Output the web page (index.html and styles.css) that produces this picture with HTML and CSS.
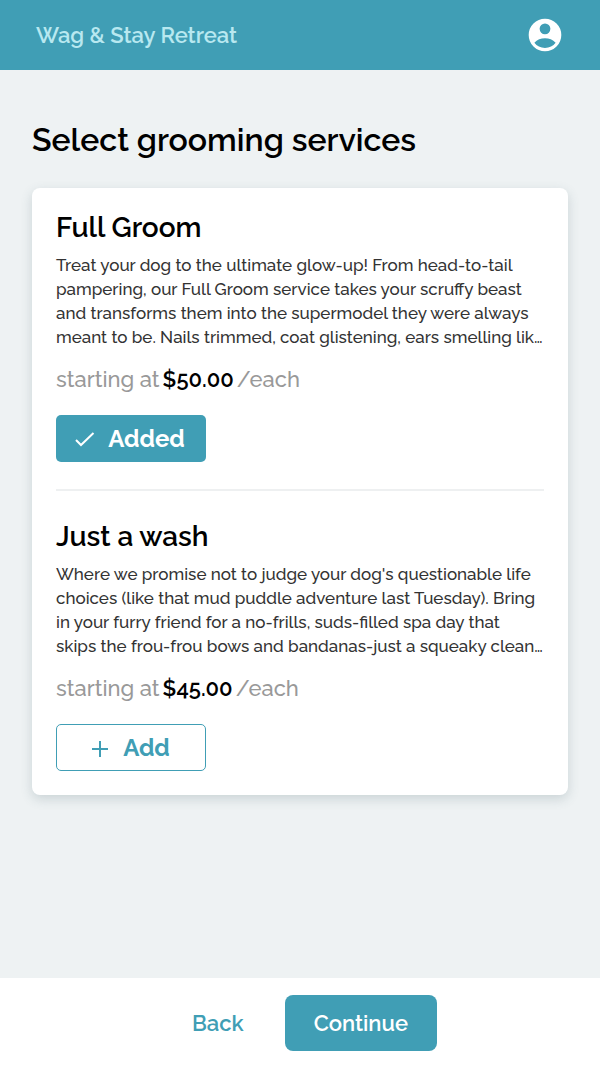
FILE: index.html
```html
<!DOCTYPE html>
<html lang="en">
<head>
    <meta charset="UTF-8">
    <meta name="viewport" content="width=device-width, initial-scale=1.0">
    <title>Wag &amp; Stay Retreat</title>
    <link rel="stylesheet" href="styles.css">
</head>
<body>
    <header class="topbar">
        <a class="brand" href="#">Wag &amp; Stay Retreat</a>
        <button class="account" type="button" aria-label="Account">
            <svg width="38" height="38" viewBox="0 0 24 24" aria-hidden="true">
                <path fill="#fff" fill-rule="evenodd" d="M12 1.700a10.300 10.300 0 1 0 0 20.600 10.300 10.300 0 0 0 0-20.600zM12 4.700a3.400 3.400 0 1 1 0 6.800 3.400 3.400 0 0 1 0-6.800zM5.300 16.900C7 14.900 9.400 14 12 14s5 .9 6.700 2.900C17.200 19 14.800 20.200 12 20.200s-5.200-1.200-6.700-3.300z"/>
            </svg>
        </button>
    </header>

    <main class="content">
        <h1>Select grooming services</h1>
        <div class="card">
            <section class="service">
                <h2>Full Groom</h2>
                <p class="description">Treat your dog to the ultimate glow-up! From head-to-tail
                    pampering, our Full Groom service takes your scruffy beast
                    and transforms them into the supermodel they were always
                    meant to be. Nails trimmed, coat glistening, ears smelling lik…</p>
                <p class="price"><span>starting at</span><strong>$50.00</strong><span>/each</span></p>
                <button class="btn btn-added" type="button">
                    <svg width="24" height="24" viewBox="0 0 24 24" aria-hidden="true">
                        <path fill="none" stroke="currentColor" stroke-width="2" d="M4 13l5 5L21.500 6"/>
                    </svg>
                    Added
                </button>
            </section>
            <section class="service">
                <h2>Just a wash</h2>
                <p class="description">Where we promise not to judge your dog's questionable life
                    choices (like that mud puddle adventure last Tuesday). Bring
                    in your furry friend for a no-frills, suds-filled spa day that
                    skips the frou-frou bows and bandanas-just a squeaky clean…</p>
                <p class="price"><span>starting at</span><strong>$45.00</strong><span>/each</span></p>
                <button class="btn btn-add" type="button">
                    <svg width="24" height="24" viewBox="0 0 24 24" aria-hidden="true">
                        <path fill="none" stroke="currentColor" stroke-width="2" d="M13 5v16M5 13h16"/>
                    </svg>
                    Add
                </button>
            </section>
        </div>
    </main>

    <footer class="actions">
        <button class="back" type="button">Back</button>
        <button class="continue" type="button">Continue</button>
    </footer>
</body>
</html>
```
FILE: styles.css
```css
* {
    box-sizing: border-box;
}

body {
    margin: 0;
    min-height: 100vh;
    display: flex;
    flex-direction: column;
    font-family: Raleway, Lato, sans-serif;
    background: #eef2f3;
    color: #000;
}

h1, h2, p {
    margin: 0;
}

button {
    font-family: inherit;
    border: none;
    cursor: pointer;
}

.topbar {
    display: flex;
    justify-content: space-between;
    align-items: center;
    height: 70px;
    padding: 0 36px;
    background: #409eb5;
}

.brand {
    font-size: 22px;
    font-weight: 600;
    color: #b8e8f0;
    text-decoration: none;
}

.account {
    display: flex;
    padding: 0;
    background: none;
}

.content {
    flex: 1;
    padding: 48px 32px;
}

h1 {
    font-size: 32px;
    font-weight: 600;
    line-height: 44px;
    margin-bottom: 26px;
}

.card {
    padding: 24px;
    background: #fff;
    border-radius: 8px;
    box-shadow: 0 4px 12px rgba(60, 90, 100, 0.2);
}

.service + .service {
    margin-top: 27px;
    padding-top: 30px;
    border-top: 2px solid #eef0f1;
}

h2 {
    font-size: 28px;
    font-weight: 600;
    line-height: 32px;
    margin-bottom: 9px;
}

.description {
    font-size: 17px;
    font-weight: 500;
    line-height: 24px;
    color: #333;
}

.price {
    display: flex;
    gap: 3px;
    margin: 16px 0 22px;
    font-size: 22px;
    font-weight: 500;
    line-height: 28px;
    color: #999;
}

.price strong {
    font-weight: 600;
    color: #000;
}

.btn {
    display: flex;
    justify-content: center;
    align-items: center;
    gap: 12px;
    width: 150px;
    height: 47px;
    padding: 0 5px 0 0;
    border-radius: 5px;
    font-size: 24px;
    font-weight: 700;
}

.btn-added {
    background: #409eb5;
    color: #fff;
}

.btn-add {
    border: 1px solid #409eb5;
    background: #fff;
    color: #409eb5;
}

.actions {
    display: flex;
    justify-content: center;
    gap: 12px;
    padding: 17px 0;
    background: #fff;
}

.back,
.continue {
    height: 56px;
    padding: 0 29px;
    border-radius: 8px;
    font-size: 22px;
    font-weight: 600;
}

.back {
    background: none;
    color: #409eb5;
}

.continue {
    background: #409eb5;
    color: #fff;
}
```
